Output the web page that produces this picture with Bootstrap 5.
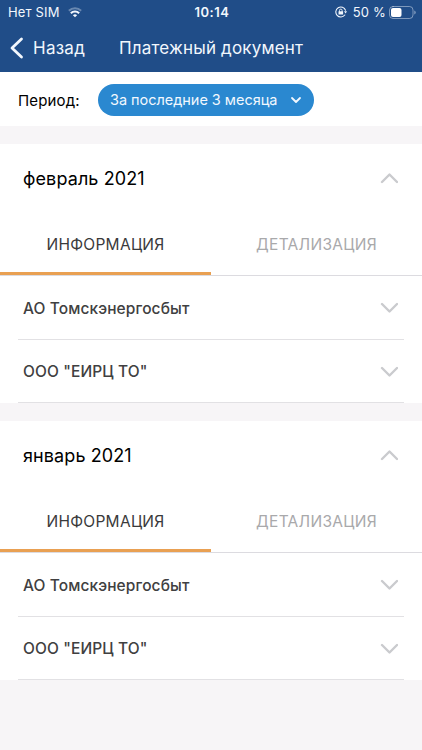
<!DOCTYPE html>
<html lang="ru">
<head>
<meta charset="utf-8">
<meta name="viewport" content="width=device-width, initial-scale=1">
<title>Платежный документ</title>
<link href="https://cdn.jsdelivr.net/npm/bootstrap@5.3.0/dist/css/bootstrap.min.css" rel="stylesheet">
<style>
body { font-family: Inter, "Liberation Sans", sans-serif; background: #f7f5f7; color: #000; overflow: hidden; }
svg { display: block; flex: none; fill: none; stroke: currentColor; stroke-linecap: round; stroke-linejoin: round; }
.app-top { height: 72px; background: #204d88; color: #f2f7fd; }
.status { height: 24px; font-size: 13px; line-height: 24px; padding: 0 6px 0 8px; }
.status > div { flex: 1 1 0; }
.status .carrier { letter-spacing: .15px; }
.status .clock { flex: 0 0 auto; font-weight: 600; letter-spacing: .55px; }
.status .pct { letter-spacing: .2px; }
.status .lock { margin-right: 6px; }
.status .battery { margin-left: 3px; }
.titlebar { height: 48px; font-size: 17px; line-height: 48px; padding-left: 9px; }
.back { width: 110px; gap: 9px; letter-spacing: .25px; }
.page-title { letter-spacing: .18px; }
.period { height: 54px; padding: 3px 18px 0; font-size: 15px; }
.period-label { width: 80px; padding-top: 1px; letter-spacing: .15px; }
.period-btn { height: 32px; width: 216px; margin-bottom: 2px; padding: 1px 12px 0; background: #2a88d0; color: #f2f8fe; font-size: 14.5px; letter-spacing: -.03px; border: 0; }
.bill { height: 259px; margin-top: 18px; }
.bill-head { height: 67px; padding: 1px 24px 0 23px; font-size: 18px; letter-spacing: .1px; }
.bill-tabs { height: 65px; border-bottom: 1px solid #dcdbe0; font-size: 15.5px; letter-spacing: .28px; }
.bill-tabs button { flex: 1 1 0; height: 64px; border: 0; background: none; color: #a9a9ab; padding: 3px 0 0; letter-spacing: inherit; }
.bill-tabs button.active { color: #3a3a3b; border-bottom: 3px solid #e9a052; padding-top: 6px; }
.bill-row { margin: 0 18px; padding: 2px 6px 0 5px; border-bottom: 1px solid #e2e1e4; font-size: 15.5px; font-weight: 500; letter-spacing: .1px; color: #404041; }
.chev { color: #cacbce; }
</style>
<script src="https://cdn.jsdelivr.net/npm/bootstrap@5.3.0/dist/js/bootstrap.bundle.min.js"></script>
</head>
<body>
<svg width="0" height="0" class="position-absolute">
  <symbol id="down" viewBox="0 0 18 12"><path d="M2 2 9.5 9.5 17 2"/></symbol>
  <symbol id="up" viewBox="0 0 18 12"><path d="M2 10 9.5 2.5 17 10"/></symbol>
</svg>
<header class="app-top">
  <div class="status d-flex align-items-center">
    <div class="d-flex align-items-center"><span class="carrier">Нет SIM</span>
      <svg class="ms-2" width="14" height="12" viewBox="0 0 16 12" stroke-width="2.4"><g stroke-linecap="butt"><path d="M1 4.5a10 10 0 0 1 14 0" opacity=".35"/><path d="M3.3 7.4a6.6 6.6 0 0 1 9.4 0"/></g><path d="M5.6 9.7a3.4 3.4 0 0 1 4.8 0L8 12z" fill="currentColor" stroke="none"/></svg>
    </div>
    <span class="clock">10:14</span>
    <div class="d-flex align-items-center justify-content-end">
      <svg class="lock" width="12" height="12" viewBox="0 0 12 12" stroke-width="1.1"><path d="M10.5 4.2A5 5 0 1 0 9.8 9"/><path d="M9 5.2h3L10.6 7.4z" fill="currentColor" stroke="none"/><rect x="3.5" y="5.3" width="4.6" height="3.2" fill="currentColor" stroke="none"/><path d="M4.5 5.5V4.4a1.3 1.3 0 0 1 2.6 0v1.1" stroke-width=".9"/></svg>
      <span class="pct">50 %</span>
      <svg class="battery" width="27" height="13" viewBox="0 0 27 13"><rect x=".5" y=".5" width="23.5" height="12" rx="3.5" opacity=".45"/><rect x="2" y="2" width="10.5" height="9" rx="2" fill="#fff" stroke="none"/><path d="M25.3 4.5v4q1.4-.6 1.4-2t-1.4-2z" fill="currentColor" stroke="none" opacity=".5"/></svg>
    </div>
  </div>
  <div class="titlebar d-flex align-items-center">
    <a class="back d-flex align-items-center text-reset text-decoration-none" href="#"><svg width="15" height="24" viewBox="0 0 15 24" stroke-width="2.8"><path d="M12.5 3 3 12l9.5 9"/></svg><span>Назад</span></a>
    <span class="page-title">Платежный документ</span>
  </div>
</header>
<section class="period bg-white d-flex align-items-center">
  <span class="period-label">Период:</span>
  <button class="period-btn rounded-pill d-flex align-items-center justify-content-between"><span>За последние 3 месяца</span><svg width="12" height="8" viewBox="0 0 12 8" stroke-width="1.8"><path d="M2 2l4 4 4-4"/></svg></button>
</section>
<main>
  <section class="bill bg-white d-flex flex-column">
    <div class="bill-head d-flex align-items-center justify-content-between"><span>февраль 2021</span><svg class="chev" width="18" height="12" stroke-width="2.4"><use href="#up"/></svg></div>
    <div class="bill-tabs d-flex"><button class="active"><span>ИНФОРМАЦИЯ</span></button><button><span>ДЕТАЛИЗАЦИЯ</span></button></div>
    <div class="bill-row flex-fill d-flex align-items-center justify-content-between"><span>АО Томскэнергосбыт</span><svg class="chev" width="18" height="12" stroke-width="2.4"><use href="#down"/></svg></div>
    <div class="bill-row flex-fill d-flex align-items-center justify-content-between"><span>ООО "ЕИРЦ ТО"</span><svg class="chev" width="18" height="12" stroke-width="2.4"><use href="#down"/></svg></div>
  </section>
  <section class="bill bg-white d-flex flex-column">
    <div class="bill-head d-flex align-items-center justify-content-between"><span>январь 2021</span><svg class="chev" width="18" height="12" stroke-width="2.4"><use href="#up"/></svg></div>
    <div class="bill-tabs d-flex"><button class="active"><span>ИНФОРМАЦИЯ</span></button><button><span>ДЕТАЛИЗАЦИЯ</span></button></div>
    <div class="bill-row flex-fill d-flex align-items-center justify-content-between"><span>АО Томскэнергосбыт</span><svg class="chev" width="18" height="12" stroke-width="2.4"><use href="#down"/></svg></div>
    <div class="bill-row flex-fill d-flex align-items-center justify-content-between"><span>ООО "ЕИРЦ ТО"</span><svg class="chev" width="18" height="12" stroke-width="2.4"><use href="#down"/></svg></div>
  </section>
</main>
</body>
</html>
